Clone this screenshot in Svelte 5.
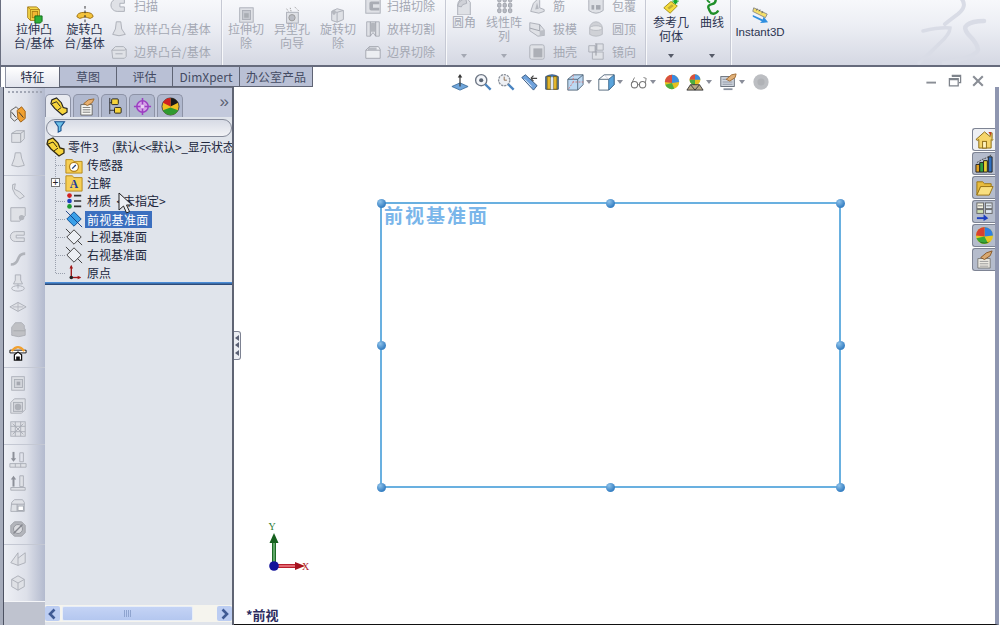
<script>
  const g = 'fill="#dfe1e6" stroke="#a9adb6"';
  const icons = {
    boss: '<path d="M3 1h10l3 3v12H6l-3-3z" fill="#f6d94b" stroke="#a67c12"/><path d="M3 1l3 3h10M6 4v12" fill="none" stroke="#a67c12"/><rect x="8" y="6" width="6" height="7" fill="#f2b632" stroke="#a67c12"/><path d="M11 11h8v6l-2 2h-6z" fill="#2fb03a" stroke="#0c6a17"/>',
    revolve: '<path d="M1 12q0-5 9-5t9 5q-3 3-6 1-3-2-6 0-3 2-6-1z" fill="#f3c33b" stroke="#9a6c0e"/><path d="M10 0v20" stroke="#222" stroke-dasharray="3 2"/>',
    sweep: `<path d="M16 2H8a6 6 0 0 0 0 14h8v-5h-5V7h5z" ${g}/>`,
    loft: `<path d="M7 2h5l1 8 4 6q-7 3-14 0l3-6z" ${g}/>`,
    bound: `<path d="M2 8l4-4h9l3 3v8l-2 2H3z" ${g}/><path d="M2 8h14l2-1M6 12h8" fill="none" stroke="#a9adb6"/>`,
    cut: `<rect x="3" y="2" width="15" height="16" ${g}/><rect x="6" y="5" width="9" height="10" fill="#c5c8cf" stroke="#a9adb6"/><rect x="8" y="8" width="5" height="5" fill="#a9adb3"/>`,
    hole: `<rect x="4" y="7" width="13" height="12" ${g}/><circle cx="10" cy="13" r="3.5" fill="#b9bcc4" stroke="#999"/><path d="M8 2l1 4M4 3l2 3M13 1l5 5" stroke="#999" stroke-dasharray="1.5 1" fill="none"/>`,
    rcut: `<path d="M3 6l6-3 7 2v10l-7 3-6-2z" ${g}/><path d="M9 7l7-2M9 7v11M3 6l6 1" fill="none" stroke="#a9adb6"/><ellipse cx="5.5" cy="7" rx="2" ry="3" fill="#b5b8bf"/>`,
    scut: `<rect x="2" y="2" width="16" height="16" ${g}/><path d="M17 5H8a2 2 0 0 0-2 2v6a2 2 0 0 0 2 2h9v-3h-7V8h7z" fill="#a9acb4"/>`,
    lcut: `<path d="M3 2h14v16h-4l-3-4-3 4H3z" ${g}/><path d="M7 2v16M13 2v16" stroke="#9a9da6"/><path d="M8 3h4l1 10h-6z" fill="#b3b6bd"/>`,
    bcut: `<path d="M2 8l4-4h10l2 3v10H2z" fill="#eceef2" stroke="#a0a4ad"/><path d="M2 8h16M6 4l-1 4" fill="none" stroke="#a0a4ad"/><rect x="5" y="5" width="9" height="3" fill="#b8bbc3"/>`,
    fillet: `<path d="M3 20V9a8 8 0 0 1 8-8h2l4 5v14z" ${g}/><path d="M3 10q1-7 9-8l1 5q-6 1-6 4z" fill="#cfd1d7" stroke="#a9adb6"/>`,
    pattern: '<g fill="#b9bcc4" stroke="#9b9ea7">' + [3,9,15].map(x=>[1,7,13].map(y=>`<rect x="${x}" y="${y}" width="3.6" height="4.4" rx="1.2"/>`).join('')).join('') + '</g>',
    rib: `<path d="M3 16l3-9 5-5 2 2v8l5 2v2l-6 2z" ${g}/><path d="M8 14l2-8 2 7z" fill="#b5b8bf"/>`,
    draft: `<path d="M2 3l11 2 5 6v6l-7 1-9-6z" ${g}/><path d="M13 5v7l5 5M13 12L2 9" fill="none" stroke="#9da0a9"/><path d="M13 12l5-1v6l-5 1z" fill="#bcbfc6"/>`,
    shell: `<rect x="2" y="2" width="16" height="16" rx="2" ${g}/><rect x="6" y="6" width="10" height="10" fill="#acafb6"/>`,
    wrap: `<ellipse cx="10" cy="4" rx="8" ry="3" ${g}/><path d="M2 4v11q8 6 16 0V4" ${g}/><rect x="5" y="9" width="3" height="5" fill="#a5a8b0"/><rect x="10" y="9" width="5" height="5" fill="#a5a8b0"/>`,
    dome: `<path d="M3 9a7 7 0 0 1 14 0v7q-7 4-14 0z" fill="#cfd1d6" stroke="#b7bac1"/><ellipse cx="10" cy="9" rx="7" ry="2.6" fill="#e6e7ea" stroke="#b7bac1"/>`,
    mirror: `<path d="M2 3h7v7H2zM11 1h7v7h-7zM6 10h12v8H6z" ${g}/><path d="M10 0v14" stroke="#8f929b"/>`,
    refgeo: '<path d="M2 12l8-7 7 5-8 8z" fill="#f6dc3c" stroke="#9e8a12"/><path d="M6 12l5-4 2 2-5 4z" fill="#222" opacity=".25"/><path d="M15 1v7M11.5 4.500h7M13 2l4 5M17 2l-4 5" stroke="#14a62a" stroke-width="1.3"/>',
    curve: '<path d="M14 1q1 6-4 7T6 12t3 6q5 2 8-3" fill="none" stroke="#1f8f2a" stroke-width="2.6"/><path d="M5 1q-1 4 3 5" fill="none" stroke="#1f8f2a" stroke-width="2"/>',
    i3d: '<path d="M3 2l15 7-2 4-14-7z" fill="#f6e06a" stroke="#888"/><path d="M6 5l1-2M9 6l1-2M12 8l1-2" stroke="#555"/><path d="M2 10l11 5 1-3 5 6-9 1 2-2-10-5z" fill="#2f8fe0"/>',

    design: '<path d="M2 6l6-4 3 3v9l-5 4-4-4z" fill="#e8e8ea" stroke="#555"/><path d="M9 6l5-4 4 5v8l-5 4-3-4z" fill="#f0a030" stroke="#9a5a10"/><path d="M3 8l5 6M11 8l5 6" stroke="#333"/>',
    ext2: `<path d="M3 6l5-3h9v9l-4 4H3z" ${g}/><path d="M3 6h10v10M13 6l4-3" fill="none" stroke="#a0a4ad"/>`,
    loft2: `<path d="M7 2h6l1 6 3 8q-7 3-14 0l3-8z" ${g}/>`,
    rib2: `<path d="M4 3l3-1-1 6 6 3 5 5-5 3-5-5-3-6z" ${g}/>`,
    draft2: `<path d="M2 3h16v9l-6 6H2z" ${g}/><path d="M12 18l-1-5 7-1z" fill="#c2c5cc"/><circle cx="14" cy="14" r="3" fill="#b3b6bd"/>`,
    gcurve: `<path d="M17 4H7a5 5 0 0 0 0 11h10v-4H8V8h9z" ${g}/>`,
    flex: `<path d="M2 15q6 0 8-6t8-6" fill="none" stroke="#b0b3ba" stroke-width="3"/>`,
    pin: `<path d="M7 1h6v6l2 4H5l2-4zM10 11v5" ${g}/><ellipse cx="10" cy="16" rx="7" ry="3" fill="none" stroke="#a9adb6"/>`,
    plane2: `<path d="M1 11l9-5 9 5-9 5z" ${g}/><path d="M4 11h12M10 6v10" stroke="#b4b7be"/>`,
    blob: '<path d="M3 15V8l4-5h7l3 3v4h1v7q-7 3-15 0z" fill="#bfc0c4" stroke="#adafb5"/><path d="M5 12h13" stroke="#a5a7ad"/>',
    mold: '<path d="M1 8h18v3H1z" fill="#fff" stroke="#111"/><path d="M3 9q7-9 14 0" fill="none" stroke="#f0a030" stroke-width="2.4"/><path d="M6 13l4-3 4 3v6H6z" fill="#fff" stroke="#111" stroke-width="1.4"/><rect x="8" y="15" width="4" height="4" fill="#111"/>',
    box1: `<rect x="3" y="3" width="14" height="15" ${g}/><rect x="6" y="6" width="9" height="9" fill="#d2d4da" stroke="#a9adb6"/><rect x="8.500" y="8.500" width="4" height="4" fill="#a5a8b0"/>`,
    box2: `<path d="M2 6l4-4h12v12l-4 4H2z" ${g}/><rect x="5" y="6" width="10" height="10" fill="#d2d4da" stroke="#a9adb6"/><circle cx="10" cy="11" r="3.600" fill="#adb0b7"/>`,
    box3: `<rect x="2" y="2" width="16" height="16" ${g}/><path d="M2 7h16M2 13h16M7 2v16M13 2v16M4 4l12 12M16 4L4 16" stroke="#a9adb6" fill="none"/>`,
    down: `<path d="M5 1v9" stroke="#8d9099" stroke-width="2.2"/><path d="M2 8h6l-3 4z" fill="#8d9099"/><path d="M12 2h4v10h-4z" fill="none" stroke="#a9adb6"/><path d="M1 14h18v4H1z" ${g}/><path d="M7 14v4M13 14v4" stroke="#a9adb6"/>`,
    up: `<path d="M5 5v9" stroke="#8d9099" stroke-width="2.2"/><path d="M2 6h6L5 2z" fill="#8d9099"/><path d="M12 2h4v12h-4z" ${g}/><path d="M2 15h16v3H2z" ${g}/>`,
    slot: `<path d="M3 6l3-3h9l2 3v10H2z" ${g}/><path d="M3 8h14M9 8v8" stroke="#a0a4ad"/><rect x="10" y="10" width="6" height="5" fill="#fff" stroke="#a0a4ad"/>`,
    nut: '<path d="M6 2h8l4 4v8l-4 4H6l-4-4V6z" fill="#b3b5bb" stroke="#9ea0a7"/><circle cx="10" cy="10" r="5" fill="#dadbdf" stroke="#8f9199"/><path d="M5 15L15 5" stroke="#85878f" stroke-width="1.500"/>',
    fold: `<path d="M10 2v14L2 13zM10 8l8-6v11l-8 3" ${g}/>`,
    hex: `<path d="M10 2l7 4v8l-7 4-7-4V6z" ${g}/><path d="M3 6l7 4 7-4M10 10v8" fill="none" stroke="#a9adb6"/>`,

    tFeature: '<path d="M3 3l5-2 5 5 2 5 4 1v4l-5 3-8-7L2 7z" fill="#f6d43c" stroke="#222" stroke-width="1.200"/><path d="M3 7l5-2 4 5M13 11l-4 3" fill="none" stroke="#222"/>',
    tProp: '<path d="M4 8h12v11H4z" fill="#f8f8f4" stroke="#666"/><path d="M6 11h8M6 13.500h8M6 16h8" stroke="#777"/><path d="M7 7l5-4 6-1-2 4-5 3z" fill="#e8b070" stroke="#9b6a30"/>',
    tConfig: '<path d="M5 1v17M5 6h4M5 14h5" fill="none" stroke="#333"/><rect x="7" y="2" width="7" height="6" rx="1" fill="#f6d43c" stroke="#222"/><rect x="10" y="11" width="7" height="6" rx="1" fill="#f6d43c" stroke="#222"/>',
    tDim: '<circle cx="10" cy="10" r="6" fill="#d6a2e8" stroke="#9c3fc2" stroke-width="1.600"/><path d="M10 1v18M1 10h18" stroke="#9c3fc2" stroke-width="1.600"/><circle cx="10" cy="10" r="2" fill="#e8d0f2"/>',
    tColor: '<circle cx="10" cy="10" r="9" fill="#f0c020" stroke="#444"/><path d="M10 1a9 9 0 0 1 8 5l-8 4z" fill="#1a1a1a"/><path d="M10 1a9 9 0 0 0-8 5l8 4z" fill="#d02020"/><path d="M2 14a9 9 0 0 0 16 0l-8-3z" fill="#2f9a30"/>',
    filter: '<path d="M1 1h14L10 8v6l-4 2V8z" fill="#6dc0e8" stroke="#154e8c" stroke-width="1.500"/>',
    part: '<path d="M3 3l5-2 5 5 2 5 4 1v4l-5 3-8-7L2 7z" fill="#f6d43c" stroke="#332a10" stroke-width="1.300"/><path d="M3 7l5-2 4 5M13 11l-4 3" fill="none" stroke="#332a10"/>',
    sensor: '<path d="M1 4h7l2 2h9v13H1z" fill="#f6cf56" stroke="#b28514"/><circle cx="10" cy="12" r="5" fill="#fff" stroke="#b5821b" stroke-width="1.400"/><path d="M8 14l4-4" stroke="#1d3a7a" stroke-width="1.400"/>',
    note: '<path d="M1 2h7l2 2h9v15H1z" fill="#f6cf56" stroke="#b28514"/><text x="10" y="16" text-anchor="middle" font-size="13" font-weight="bold" font-family="Liberation Serif" fill="#1d3a9a">A</text>',
    mat: '<circle cx="5" cy="4" r="2.600" fill="#d02020"/><circle cx="5" cy="10" r="2.600" fill="#1c3fc0"/><circle cx="5" cy="16" r="2.600" fill="#1e9a2e"/><path d="M10 4h8M10 10h8M10 16h8" stroke="#333" stroke-width="1.800"/>',
    planeSel: '<path d="M10 2l8 8-8 8-8-8z" fill="#3aa0e8" stroke="#0a4a90"/><path d="M1 1l18 18" stroke="#123a80"/>',
    plane: '<path d="M10 2l8 8-8 8-8-8z" fill="#eceff4" stroke="#333"/><path d="M1 1l5 5M14 14l5 5" stroke="#333"/>',
    origin: '<path d="M7 2v13" stroke="#a01818" stroke-width="1.500"/><path d="M5 5l2-4 2 4z" fill="#a01818"/><path d="M7 15h10" stroke="#a01818" stroke-width="1.500"/><path d="M14 13l4 2-4 2z" fill="#a01818"/><circle cx="7" cy="15" r="2" fill="#222"/>',

    hNormal: '<path d="M1 15l9-4 9 4-9 4z" fill="#6fa6dc" stroke="#41719e"/><path d="M10 15V3" stroke="#333" stroke-width="1.300"/><path d="M7.500 5L10 1l2.500 4z" fill="#333"/>',
    hZoom: '<circle cx="8" cy="8" r="6.200" fill="#f4f6fa" stroke="#6d7684" stroke-width="1.500"/><path d="M12.500 12.500l6 6" stroke="#4a84c0" stroke-width="2.600"/><circle cx="8" cy="8" r="2.300" fill="#5b6573"/>',
    hZoom2: '<circle cx="8" cy="8" r="6.200" fill="#eef0f4" stroke="#8a909a" stroke-width="1.500" stroke-dasharray="2.500 1"/><path d="M12.500 12.500l6 6" stroke="#4a84c0" stroke-width="2.600"/><path d="M8 4v4h3" fill="none" stroke="#8a6a4a"/>',
    hPrev: '<path d="M2 5l4-3 13 12-4 5z" fill="#6fa2dc" stroke="#33557c"/><path d="M5 7l8 8" stroke="#fff"/><path d="M12 6h7M12 6l3-3M12 6l3 3" fill="none" stroke="#444" stroke-width="1.300"/>',
    hSect: '<path d="M3 4q7-4 14 0v14H3z" fill="#4a86c8" stroke="#2f4a70"/><rect x="4.500" y="4" width="4" height="14" fill="#e2b62c" stroke="#7a6010"/><rect x="11.500" y="4" width="4" height="14" fill="#e2b62c" stroke="#7a6010"/><path d="M8.500 5q1.500-1 3 0v13h-3z" fill="#dfe8f2"/>',
    hOrient: '<path d="M2 7l6-5h11v11l-6 6H2z" fill="#bcd8f2" stroke="#4f6478"/><path d="M2 7h11v12M13 7l6-5" fill="none" stroke="#4f6478"/><path d="M8 2v8h11M8 10l-6 9" stroke="#d07070" stroke-dasharray="2 1.500" fill="none"/>',
    hDisplay: '<path d="M2 7l6-5h11v11l-6 6H2z" fill="#fff" stroke="#4f6478"/><path d="M13 7l6-5v11l-6 6z" fill="#5aa4dc" stroke="#3e6a90"/><path d="M2 7h11" stroke="#4f6478"/><path d="M8 2l5 5" stroke="#aac" opacity=".5"/>',
    hHide: '<circle cx="5" cy="13" r="3.500" fill="none" stroke="#777" stroke-width="1.200"/><circle cx="14" cy="13" r="3.500" fill="none" stroke="#777" stroke-width="1.200"/><path d="M2 11l3-6M17 11l1-5-3-1M8.500 13h2" fill="none" stroke="#777"/>',
    hColor: '<circle cx="10" cy="10" r="8" fill="#e4c020"/><path d="M10 2a8 8 0 0 1 8 8l-8 1z" fill="#3b8be0"/><path d="M10 2a8 8 0 0 0-8 8l8 1z" fill="#d85040"/><path d="M2.500 13a8 8 0 0 0 10 4.500L10 11z" fill="#4cae40"/>',
    hScene: '<circle cx="10" cy="7.500" r="6" fill="#e4c020"/><path d="M10 1.500a6 6 0 0 1 6 6h-6z" fill="#3b8be0"/><path d="M10 1.500a6 6 0 0 0-6 6h6z" fill="#d85040"/><path d="M4 7.500a6 6 0 0 0 6 6v-6z" fill="#4cae40"/><path d="M1 19l4-6h10l4 6z" fill="#b8a888" stroke="#333"/><path d="M5 13l5 6 5-6" fill="none" stroke="#333"/>',
    hView: '<rect x="2" y="4" width="15" height="11" fill="#d0d6de" stroke="#5f6873"/><path d="M4 7h11M4 10h11M4 12.500h11" stroke="#8a92a0"/><path d="M5 17h10v2H5z" fill="#8a92a0"/><path d="M8 7l6-5 5-1-1 4-6 4z" fill="#e0b078" stroke="#a06a30"/>',
    hDis: '<circle cx="10" cy="10" r="8.500" fill="#bcbec2"/><circle cx="10" cy="10" r="4" fill="#b0b2b6"/>',

    pHome: '<path d="M1 10l9-8 6 5V3h2v6l1 1-1 1-1-1v9H4v-9l-1 1z" fill="#f6d56a" stroke="#8a6a14"/><path d="M14 2h3v4z" fill="#c83a20"/><rect x="8" y="12" width="4" height="7" fill="#fff3c0" stroke="#8a6a14"/>',
    pChart: '<path d="M1 11h4v8H1z" fill="#e0a020" stroke="#222"/><path d="M5 9h4v10H5z" fill="#2fa040" stroke="#222"/><path d="M9 7h4v12H9z" fill="#e6d030" stroke="#222"/><path d="M14 3h4v16h-4z" fill="#2f6fc0" stroke="#222"/><path d="M2 9l5-3 5-2 5-3" stroke="#444" stroke-dasharray="2 1" fill="none"/>',
    pFolder: '<path d="M2 6V4h6l2 2h7v3H6l-4 9z" fill="#e8bc3e" stroke="#9a7414"/><path d="M6 9h13l-4 9H2z" fill="#f8df80" stroke="#9a7414"/>',
    pList: '<rect x="2" y="1" width="7" height="6" fill="#f4f2e0" stroke="#666"/><rect x="11" y="1" width="7" height="6" fill="#dfe8f2" stroke="#666"/><rect x="2" y="8" width="7" height="4" fill="#cfe0b0" stroke="#666"/><rect x="11" y="8" width="7" height="4" fill="#dfe8f2" stroke="#666"/><path d="M3 4h5M12 4h5" stroke="#777"/><path d="M2 17h9" stroke="#1d3fc0" stroke-width="2"/><path d="M9 13l5 4-5 3z" fill="#1d3fc0"/>',
    pColor: '<circle cx="10" cy="10" r="9" fill="#e8c820"/><path d="M10 1a9 9 0 0 1 9 9l-9 1z" fill="#3080e0"/><path d="M10 1a9 9 0 0 0-9 9l9 1z" fill="#d84030"/><path d="M1.500 13a9 9 0 0 0 12 5L10 11z" fill="#38a838"/><path d="M4 16a9 9 0 0 0 12 0q-6 3-12 0z" fill="#1a4a10" opacity=".7"/>',
    pProp: '<path d="M3 9h13v10H3z" fill="#eceae2" stroke="#7a7a7a"/><path d="M5 12h9M5 14.500h9M5 17h9" stroke="#999"/><path d="M6 8l6-5 6-2-2 5-6 4z" fill="#d8a870" stroke="#8a5a28"/>',

    minus: '<path d="M3 12h12" stroke="#8a8e96" stroke-width="2.400"/>',
    restore: '<path d="M6 3h11v9h-2M3 7h11v9H3z" fill="none" stroke="#7f848c" stroke-width="1.600"/><path d="M6 3h11v2H6zM3 7h11v2H3z" fill="#7f848c"/>',
    close: '<path d="M4 4l12 12M16 4L4 16" stroke="#8a8e96" stroke-width="2.600"/>',
  };

  const big = (lines, icon, w, opts = {}) => ({ type: 'big', lines, icon, w, ...opts });
  const col = (items, w, gap, ml = 0) => ({ type: 'col', items, w, gap, ml });
  const sep = { type: 'sep' };
  const ribbon = [
    big(['拉伸凸', '台/基体'], 'boss', 50),
    big(['旋转凸', '台/基体'], 'revolve', 51),
    col([['sweep', '扫描'], ['loft', '放样凸台/基体'], ['bound', '边界凸台/基体']], 110, 6),
    sep,
    big(['拉伸切', '除'], 'cut', 46, { dim: true }),
    big(['异型孔', '向导'], 'hole', 46, { dim: true }),
    big(['旋转切', '除'], 'rcut', 46, { dim: true }),
    col([['scut', '扫描切除'], ['lcut', '放样切割'], ['bcut', '边界切除']], 80, 5, 3),
    sep,
    big(['圆角'], 'fillet', 34, { dim: true, up: true, arrow: true }),
    big(['线性阵', '列'], 'pattern', 46, { dim: true, up: true, arrow: true }),
    col([['rib', '筋'], ['draft', '拔模'], ['shell', '抽壳']], 59, 7, 1),
    col([['wrap', '包覆'], ['dome', '圆顶'], ['mirror', '镜向']], 57, 7),
    sep,
    big(['参考几', '何体'], 'refgeo', 48, { up: true, arrow: true }),
    big(['曲线'], 'curve', 34, { up: true, arrow: true }),
    sep,
    big(['Instant3D'], 'i3d', 56, { mid: true }),
  ];
  const tabs = ['特征', '草图', '评估', 'DimXpert', '办公室产品'];
  const strip = [
    ['design', 1], ['ext2', 0], ['loft2', 0], 'hr',
    ['rib2', 0], ['draft2', 0], ['gcurve', 0], ['flex', 0], ['pin', 0], ['plane2', 0], ['blob', 0], ['mold', 1], 'hr',
    ['box1', 0], ['box2', 0], ['box3', 0], 'hr',
    ['down', 0], ['up', 0], ['slot', 0], ['nut', 0], 'hr',
    ['fold', 0], ['hex', 0],
  ];
  const fmTabs = ['tFeature', 'tProp', 'tConfig', 'tDim', 'tColor'];
  const tree = [
    { icon: 'sensor', text: '传感器' },
    { icon: 'note', text: '注解', plus: true },
    { icon: 'mat', text: '材质  <未指定>' },
    { icon: 'planeSel', text: '前视基准面', sel: true },
    { icon: 'plane', text: '上视基准面' },
    { icon: 'plane', text: '右视基准面' },
    { icon: 'origin', text: '原点' },
  ];
  const heads = [
    ['hNormal'], ['hZoom'], ['hZoom2'], ['hPrev'], ['hSect'], ['hOrient', 1], ['hDisplay', 1], ['hHide', 1], ['hColor'], ['hScene', 1], ['hView', 1], ['hDis'],
  ];
  const pane = ['pHome', 'pChart', 'pFolder', 'pList', 'pColor', 'pProp'];
  const handles = [[381, 203], [610, 203], [840, 203], [381, 345], [840, 345], [381, 487], [610, 487], [840, 487]];
</script>

{#snippet ic(name, size = 18)}
  <svg class="ic" width={size} height={size} viewBox="0 0 20 20">{@html icons[name]}</svg>
{/snippet}

<div class="app">
  <header class="ribbon">
    {#each ribbon as it}
      {#if it.type === 'sep'}
        <div class="sep"></div>
      {:else if it.type === 'col'}
        <div class="col" style="width:{it.w}px;margin-left:{it.ml}px">
          {#each it.items as [icon, text]}
            <div class="small" style="gap:{it.gap}px">{@render ic(icon)}<span>{text}</span></div>
          {/each}
        </div>
      {:else}
        <div class="big" class:dim={it.dim} class:up={it.up} class:mid={it.mid} style="width:{it.w}px">
          {@render ic(it.icon)}
          <div class="label">{#each it.lines as l}<div>{l}</div>{/each}</div>
          {#if it.arrow}<i class="caret"></i>{/if}
        </div>
      {/if}
    {/each}
    <svg class="logo" width="100" height="65" viewBox="900 0 100 65">
      <g fill="none" stroke="#d9dce6" stroke-linecap="round">
        <path d="M961-2Q968 6 958 14 950 20 945 24" stroke-width="4"/>
        <path d="M923 31Q940 27 950 28 950 34 940 43 930 53 919 63" stroke-width="3.500"/>
        <path d="M984 21Q972 21 967 25 963 28 968 34 978 44 978 50 976 57 944 63" stroke-width="4.500"/>
      </g>
    </svg>
  </header>

  <div class="topbar">
    <nav class="tabs">
      {#each tabs as t, i}<div class="tab t{i}" class:active={i === 0}>{t}</div>{/each}
    </nav>
    <div class="heads">
      {#each heads as [name, more]}
        <div class="head" class:more={more}>{@render ic(name)}{#if more}<i class="caret small-caret"></i>{/if}</div>
      {/each}
    </div>
    <div class="winbtns">
      {@render ic('minus', 16)}{@render ic('restore', 16)}{@render ic('close', 16)}
    </div>
  </div>

  <main class="work">
    <aside class="left">
      <div class="strip">
        <div class="grip"></div>
        {#each strip as s}
          {#if s === 'hr'}<div class="hr"></div>
          {:else}<div class="sbtn" class:dim={!s[1]}>{@render ic(s[0])}</div>{/if}
        {/each}
        <div class="stripfoot"></div>
      </div>
      <div class="manager">
        <div class="fmtabs">
          {#each fmTabs as t, i}<div class="fmtab" class:on={i === 0}>{@render ic(t, 19)}</div>{/each}
          <span class="chev">»</span>
        </div>
        <div class="filter">{@render ic('filter', 14)}</div>
        <div class="treebox">
          <div class="root">{@render ic('part', 20)}<span class="rname">零件3</span><span class="rcfg">(默认&lt;&lt;默认&gt;_显示状态 1&gt;)</span></div>
          <div class="items">
            {#each tree as n}
              <div class="node">
                <i class="tick"></i>
                {#if n.plus}<b class="plus">+</b>{/if}
                {@render ic(n.icon)}
                <span class="ntext" class:sel={n.sel}>{n.text}</span>
              </div>
            {/each}
          </div>
        </div>
        <div class="rule"></div>
        <div class="fill"></div>
        <div class="hscroll">
          <button class="sb" aria-label="左"><svg width="10" height="12" viewBox="0 0 10 12"><path d="M7.500 1.500L3 6l4.500 4.500" fill="none" stroke="#3f5a94" stroke-width="2.600"/></svg></button>
          <div class="thumb"><span></span></div>
          <button class="sb" aria-label="右"><svg width="10" height="12" viewBox="0 0 10 12"><path d="M2.500 1.500L7 6l-4.500 4.500" fill="none" stroke="#3f5a94" stroke-width="2.600"/></svg></button>
        </div>
      </div>
      <div class="splitter"><i></i><i></i><i></i></div>
    </aside>

    <section class="canvas">
      <div class="plane">
        <div class="planelabel">前视基准面</div>
      </div>
      {#each handles as [x, y]}
        <i class="dot" style="left:{x - 234 - 4.5}px;top:{y - 87 - 4.5}px"></i>
      {/each}
      <svg class="triad" width="80" height="60" viewBox="0 0 80 60">
        <path d="M9 40V13" stroke="#1d6a24" stroke-width="4"/><path d="M9 40V13" stroke="#6fb878" stroke-width="1.600"/>
        <path d="M4.500 17L9 7l4.500 10z" fill="#16601e"/>
        <path d="M11 40h24" stroke="#b81e2c" stroke-width="4"/><path d="M11 40h24" stroke="#f08088" stroke-width="1.500"/>
        <path d="M30 36l10 4-10 4z" fill="#a5121e"/>
        <circle cx="9" cy="40" r="4.800" fill="#14149a"/>
        <text x="7" y="4" text-anchor="middle" class="ax y">Y</text>
        <text x="37" y="44" class="ax x">X</text>
      </svg>
      <div class="viewname"><span>*</span>前视</div>
      <div class="pane">
        {#each pane as p, i}<div class="ptab" class:first={i === 0}>{@render ic(p, 19)}</div>{/each}
      </div>
      <svg class="cursor" width="20" height="26" viewBox="0 0 20 26"><path d="M1 1v17l4.500-4 3 7 3-1.500-3-6.500H14z" fill="#eceff4" stroke="#222"/></svg>
    </section>
  </main>
</div>

<style>
  :global(body) { margin: 0; background: #fff; }
  .app {
    width: 1000px; height: 625px; overflow: hidden; display: flex; flex-direction: column;
    font: 12px/14px "Noto Sans CJK SC", "Liberation Sans", sans-serif; color: #2c3450;
  }
  .ic { display: block; flex: none; }

  .ribbon {
    position: relative; flex: none; display: flex; box-sizing: border-box; overflow: hidden;
    background: linear-gradient(#f7f8fb 0, #eceef4 40%, #d5d8e3 100%);
    border-left: 1px solid #6a6f80; border-bottom: 2px solid #666b7c; height: 67px; padding-left: 8px;
  }
  .sep { width: 1px; height: 65px; background: #c6c9d4; box-shadow: 1px 0 #f8f9fb; margin: 0 1px; flex: none; }
  .big { display: flex; flex-direction: column; align-items: center; flex: none; position: relative; height: 65px; padding-top: 6px; box-sizing: border-box; }
  .big .label { text-align: center; margin-top: -2px; white-space: nowrap; }
  .big.up { padding-top: 0; margin-top: -1px; }
  .big.up .ic { margin-top: -2px; }
  .big.up .label { margin-top: 0; }
  .big.mid .label { font-family: "Liberation Sans", sans-serif; font-size: 11.500px; margin-top: 1px; }
  .dim .label { color: #a4a8b3; }
  .caret { position: absolute; bottom: 6px; left: 50%; margin-left: -3px; border: 3px solid transparent; border-top: 4px solid #555a68; border-bottom: 0; }
  .dim .caret { border-top-color: #a4a8b3; }
  .col { flex: none; display: flex; flex-direction: column; margin-top: -6px; box-sizing: border-box; }
  .small { display: flex; align-items: center; height: 23px; color: #a4a8b3; white-space: nowrap; }
  .logo { position: absolute; right: 0; top: 0; }

  .topbar { height: 20px; flex: none; display: flex; position: relative; z-index: 2; }
  .tabs { display: flex; padding-left: 4px; width: 448px; box-sizing: border-box; border-left: 1px solid #6a6f80; flex: none; }
  .tab { height: 20px; box-sizing: border-box; text-align: center; line-height: 19px; background: #b9c0d5; border: 1px solid #5f6474; border-top: 0; border-left-width: 0; color: #444b63; }
  .t0 { width: 55px; } .t1 { width: 57px; } .t2 { width: 56px; } .t3 { width: 67px; } .t4 { width: 73px; }
  .tab.active { background: linear-gradient(#fff, #e3e5ee); color: #222a44; height: 21px; border-left: 1px solid #8d92a2; }
  .heads { display: flex; align-items: center; padding-top: 9px; height: 20px; box-sizing: border-box; }
  .head { width: 23px; height: 18px; display: flex; justify-content: center; position: relative; flex: none; }
  .head.more { margin-right: 10px; }
  .head:nth-child(6) { margin-right: 8px; }
  .small-caret { left: auto; right: -6px; bottom: 7px; margin: 0; border-top-color: #8a8e9a; }
  .winbtns { display: flex; padding: 6px 14px 0 0; gap: 7px; position: absolute; right: 0; top: 0; }

  .work { flex: 1; display: flex; min-height: 0; }
  .left { width: 234px; flex: none; display: flex; position: relative; border-left: 3px solid #a6acbb; box-sizing: border-box; }
  .strip {
    width: 42px; flex: none; display: flex; flex-direction: column; align-items: center; padding-top: 4px; box-sizing: border-box;
    border-left: 1px solid #4d5262;
    background: linear-gradient(90deg, #eef0f5, #dde0e9 55%, #b3bace);
    position: relative;
  }
  .grip { width: 34px; height: 0; border-top: 2px dotted #a2a7b5; margin-bottom: 9.500px; flex: none; }
  .sbtn { height: 23px; display: flex; align-items: center; justify-content: center; width: 100%; padding-right: 13px; box-sizing: border-box; flex: none; }
  .hr { width: 100%; height: 1px; background: #c4c8d3; margin: 3.500px 0; flex: none; }
  .stripfoot { position: absolute; left: 0; right: 0; bottom: 0; height: 23px; background: #bfc3cf; border-top: 1px solid #f4f5f8; }

  .manager { flex: 1; min-width: 0; display: flex; flex-direction: column; background: #e0e4eb; border-right: 2px solid #5f6473; }
  .fmtabs { height: 30px; flex: none; display: flex; align-items: flex-end; gap: 2px; padding-left: 0; background: #c3c9dc; border-top: 1px solid #6d7283; box-sizing: border-box; position: relative; }
  .fmtab { width: 26px; height: 23px; background: #b0b8ce; border: 1px solid #8d93a6; border-bottom: 0; border-radius: 5px 5px 0 0; display: flex; align-items: center; justify-content: center; box-sizing: border-box; }
  .fmtab.on { background: #e8eaf0; }
  .chev { position: absolute; right: 3px; top: 4px; font: 17px/20px "Liberation Sans", sans-serif; color: #5a6072; }
  .filter { height: 18px; margin: 2px 0 0 1px; background: linear-gradient(#d7dbe5, #f2f3f6); border: 1px solid #868b9a; border-radius: 9px; box-sizing: border-box; display: flex; align-items: center; padding-left: 7px; flex: none; }
  .treebox { flex: none; height: 146px; position: relative; overflow: hidden; padding-top: 1px; box-sizing: border-box; color: #20273d; }
  .root { display: flex; align-items: center; height: 18px; white-space: nowrap; }
  .rname { margin-left: 3px; }
  .rcfg { margin-left: 13px; letter-spacing: -0.300px; }
  .items { padding-left: 10px; position: relative; background: repeating-linear-gradient(#9aa0ad 0 1px, transparent 1px 2px) 10px 0 / 1px 117px no-repeat; }
  .node { display: flex; align-items: center; height: 18px; padding-left: 10px; position: relative; white-space: nowrap; }
  .node .ic { margin-right: 4px; }
  .ntext { white-space: pre; }
  .tick { position: absolute; left: 1px; width: 9px; top: 9px; border-top: 1px dotted #9aa0ad; }
  .plus { position: absolute; left: -4px; top: 4px; background: #fff; border: 1px solid #777; font: 10px/8px "Liberation Sans", sans-serif; text-align: center; color: #222; box-sizing: content-box; width: 7px; height: 7px; }
  .sel { background: #3b6fbf; color: #fff; padding: 0 3px 0 2px; margin-left: -2px; line-height: 17px; letter-spacing: .3px; }
  .rule { height: 3px; flex: none; background: linear-gradient(#4a8bd6 0 1px, #3d6ea8 1px 2px, #2e4a78 2px); margin-top: -1px; }
  .fill { flex: 1; }
  .hscroll { height: 17px; flex: none; display: flex; margin-bottom: 3px; background: #f5f4ee; }
  .sb { width: 15px; height: 15px; margin: 1px 0; padding: 0; border: 0; background: #bccdf2; display: flex; align-items: center; justify-content: center; border-radius: 2px; }
  .thumb { width: 132px; margin: 1px 2px 0; height: 15px; background: linear-gradient(#c4d3f5, #b4c7ef); border: 1px solid #e8eef8; box-sizing: border-box; border-radius: 2px; display: flex; align-items: center; justify-content: center; }
  .thumb + .sb { margin-left: 22px; }
  .thumb span { width: 8px; height: 7px; background: repeating-linear-gradient(90deg, #8fa4cf 0 1px, transparent 1px 2px); }
  .splitter { position: absolute; left: 231px; top: 244px; width: 7px; height: 29px; background: #eceef3; border: 1px solid #7d8292; border-left: 0; border-radius: 0 3px 3px 0; display: flex; flex-direction: column; justify-content: space-around; align-items: center; padding: 2px 0; box-sizing: border-box; z-index: 3; }
  .splitter i { border: 3px solid transparent; border-left: 0; border-right: 4px solid #5a6074; }

  .canvas { flex: 1; position: relative; background: #fff; border-right: 4px solid #8f96b0; border-bottom: 1px solid #111; margin-right: 1px; }
  .plane { position: absolute; left: 146px; top: 115px; width: 461px; height: 286px; box-sizing: border-box; border: 2px solid #69b0e0; }
  .planelabel { font: 700 19px/22px "Noto Sans CJK SC", sans-serif; color: #7ab6ea; letter-spacing: 2px; padding-left: 2px; }
  .dot { position: absolute; width: 9px; height: 9px; border-radius: 50%; background: radial-gradient(circle at 35% 30%, #8ec2ea, #3a82c4 65%); }
  .triad { position: absolute; left: 31px; top: 439px; overflow: visible; }
  .ax { font: 10px "Liberation Serif", serif; }
  .ax.y { fill: #2a7a32; } .ax.x { fill: #b01c28; }
  .viewname { position: absolute; left: 12px; top: 519px; font-weight: 700; font-size: 13px; line-height: 18px; color: #2c2c5e; }
  .pane { position: absolute; right: 0; top: 41px; display: flex; flex-direction: column; gap: 1px; }
  .ptab { width: 23px; height: 23px; background: #b5bccc; border: 1px solid #7e8494; border-right: 0; border-radius: 3px 0 0 3px; box-sizing: border-box; display: flex; align-items: center; justify-content: center; }
  .ptab.first { background: #eef0f4; }
  .cursor { position: absolute; left: -116px; top: 105px; z-index: 5; }
</style>
